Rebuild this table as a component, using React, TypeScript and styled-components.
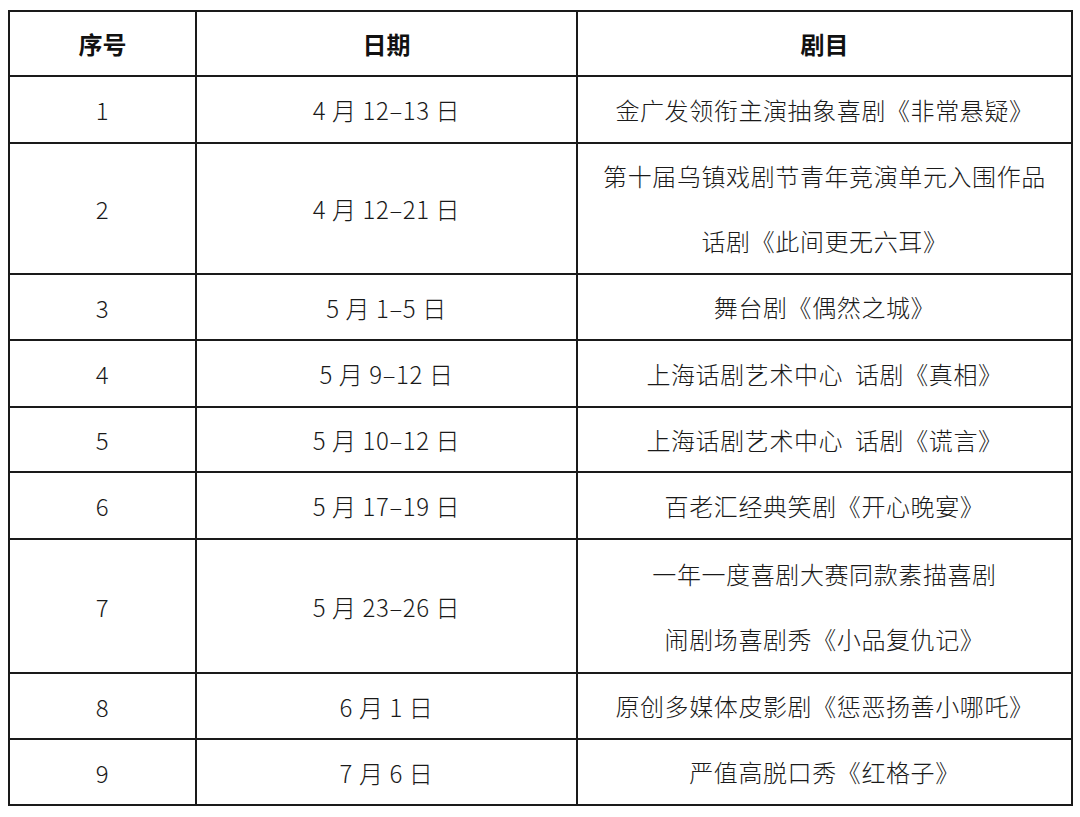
import React from "react";
import styled, { createGlobalStyle } from "styled-components";

const Global = createGlobalStyle`
  html, body { margin: 0; padding: 0; background: #ffffff; }
  body { font-family: "Noto Sans CJK SC", "Noto Sans", sans-serif; color: #1e1e1e; }
`;

const Page = styled.div`
  padding: 10px 9px 12px 8px;
`;

const Table = styled.table`
  width: 1063px;
  border-collapse: collapse;
  table-layout: fixed;
  font-size: 24px;
`;

const Col = styled.col<{ $w: number }>`
  width: ${(p) => p.$w}px;
`;

const Row = styled.tr<{ $h: number }>`
  height: ${(p) => p.$h}px;
`;

const HeadCell = styled.th`
  border: 2px solid #1a1a1a;
  padding: 0;
  text-align: center;
  vertical-align: middle;
  font-weight: 700;
  line-height: 30px;
  color: #111;
`;

const Cell = styled.td`
  border: 2px solid #1a1a1a;
  padding: 0;
  text-align: center;
  vertical-align: middle;
  font-weight: 300;
  letter-spacing: 0.6px;
  color: #1a1a1a;
  white-space: pre;
`;

const Line = styled.div`
  height: 64px;
  line-height: 64px;

  & + & {
    margin-top: 1px;
  }
`;

const Lines = styled.div`
  display: flex;
  flex-direction: column;
  & > div:only-child {
    height: 40px;
    line-height: 40px;
  }
`;

type Item = { no: string; date: string; titles: string[]; h: number };

const items: Item[] = [
  { no: "1", date: "4 月 12–13 日", titles: ["金广发领衔主演抽象喜剧《非常悬疑》"], h: 67 },
  { no: "2", date: "4 月 12–21 日", titles: ["第十届乌镇戏剧节青年竞演单元入围作品", "话剧《此间更无六耳》"], h: 131 },
  { no: "3", date: "5 月 1–5 日", titles: ["舞台剧《偶然之城》"], h: 66 },
  { no: "4", date: "5 月 9–12 日", titles: ["上海话剧艺术中心  话剧《真相》"], h: 67 },
  { no: "5", date: "5 月 10–12 日", titles: ["上海话剧艺术中心  话剧《谎言》"], h: 65 },
  { no: "6", date: "5 月 17–19 日", titles: ["百老汇经典笑剧《开心晚宴》"], h: 67 },
  { no: "7", date: "5 月 23–26 日", titles: ["一年一度喜剧大赛同款素描喜剧", "闹剧场喜剧秀《小品复仇记》"], h: 134 },
  { no: "8", date: "6 月 1 日", titles: ["原创多媒体皮影剧《惩恶扬善小哪吒》"], h: 66 },
  { no: "9", date: "7 月 6 日", titles: ["严值高脱口秀《红格子》"], h: 66 },
];

export default function App() {
  return (
    <>
      <Global />
      <Page>
        <Table>
          <colgroup>
            <Col $w={187} />
            <Col $w={381} />
            <Col $w={495} />
          </colgroup>
          <thead>
            <Row $h={65}>
              <HeadCell>序号</HeadCell>
              <HeadCell>日期</HeadCell>
              <HeadCell>剧目</HeadCell>
            </Row>
          </thead>
          <tbody>
            {items.map((it) => (
              <Row key={it.no} $h={it.h}>
                <Cell>{it.no}</Cell>
                <Cell>{it.date}</Cell>
                <Cell>
                  <Lines>
                    {it.titles.map((t) => (
                      <Line key={t}>{t}</Line>
                    ))}
                  </Lines>
                </Cell>
              </Row>
            ))}
          </tbody>
        </Table>
      </Page>
    </>
  );
}
